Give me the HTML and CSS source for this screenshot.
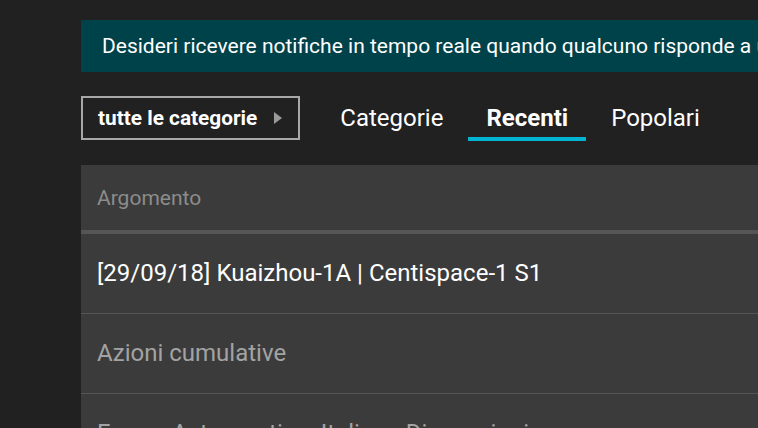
FILE: index.html
```html
<!DOCTYPE html>
<html lang="it">
<head>
<meta charset="utf-8">
<title>Recenti</title>
<link rel="stylesheet" href="styles.css">
</head>
<body>
<div class="page">
  <div class="banner">Desideri ricevere notifiche in tempo reale quando qualcuno risponde a uno dei tuoi argomenti?</div>
  <div class="nav">
    <button class="cat-btn"><span>tutte le categorie</span><span class="caret"></span></button>
    <div class="tabs">
      <a class="tab">Categorie</a>
      <a class="tab active">Recenti</a>
      <a class="tab">Popolari</a>
    </div>
  </div>
  <div class="table">
    <div class="thead">Argomento</div>
    <div class="row">[29/09/18] Kuaizhou-1A | Centispace-1 S1</div>
    <div class="row muted">Azioni cumulative</div>
    <div class="row muted">Forum Astronautico: Italiano Discussioni</div>
  </div>
</div>
</body>
</html>
```
FILE: styles.css
```css
html, body {
  margin: 0;
  background: #212121;
  overflow: hidden;
  font-family: Roboto, "Liberation Sans", sans-serif;
}
.page {
  padding: 20px 0 0 81px;
  width: 820px;
}
.banner {
  background: #00424a;
  color: #ffffff;
  height: 52px;
  line-height: 52px;
  padding-left: 21px;
  font-size: 21px;
  white-space: nowrap;
  overflow: hidden;
}
.nav {
  display: flex;
  align-items: flex-start;
  margin-top: 24px;
  gap: 22px;
}
.cat-btn {
  display: flex;
  align-items: center;
  gap: 17px;
  height: 44px;
  box-sizing: border-box;
  border: 2px solid #a8a8a8;
  background: #212121;
  color: #ffffff;
  font-family: Roboto, "Liberation Sans", sans-serif;
  font-weight: 700;
  font-size: 20.8px;
  padding: 0 16px 0 15px;
}
.caret {
  width: 0;
  height: 0;
  border-top: 6px solid transparent;
  border-bottom: 6px solid transparent;
  border-left: 8px solid #9a9a9a;
}
.tabs {
  display: flex;
  gap: 7px;
}
.tab {
  display: block;
  padding: 3px 18px 0;
  height: 38px;
  line-height: 38px;
  border-bottom: 4px solid transparent;
  color: #ffffff;
  font-size: 24px;
}
.tab.active {
  font-weight: 700;
  border-bottom-color: #00b4d2;
}
.table {
  margin-top: 24px;
  background: #3b3b3b;
}
.thead {
  height: 65px;
  line-height: 66px;
  padding-left: 16px;
  font-size: 21px;
  color: #8c8c8c;
  border-bottom: 4px solid #555555;
}
.row {
  height: 79px;
  line-height: 79px;
  padding-left: 16px;
  font-size: 24px;
  color: #ffffff;
  border-bottom: 1px solid #555555;
}
.row.muted {
  color: #a3a3a3;
}
```
